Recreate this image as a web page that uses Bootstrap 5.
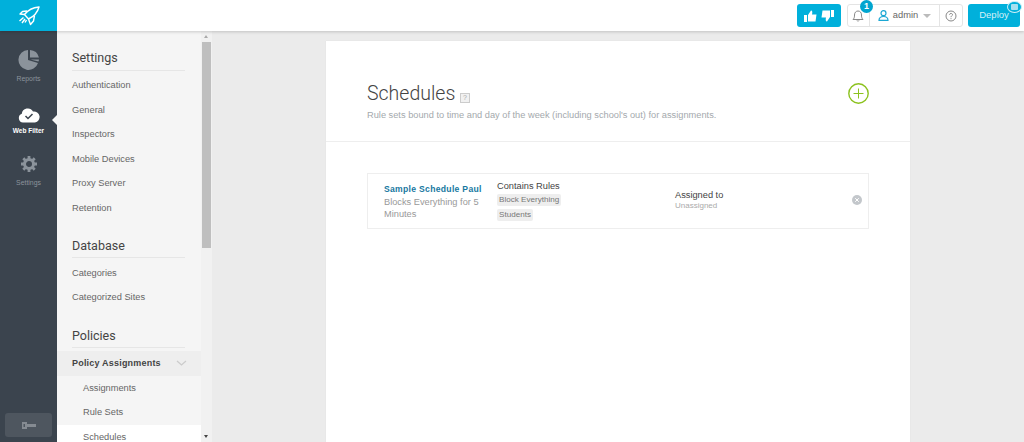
<!DOCTYPE html>
<html lang="en">
<head>
<meta charset="utf-8">
<title>Schedules</title>
<link href="https://cdn.jsdelivr.net/npm/bootstrap@5.3.0/dist/css/bootstrap.min.css" rel="stylesheet">
<style>
html,body{height:100%;overflow:hidden}
body{font-family:"Liberation Sans",Arial,sans-serif;background:#ebebeb;color:#333}
.shell{height:442px}
.topbar{height:31px;background:#fff;box-shadow:0 1px 3px rgba(0,0,0,.18);position:relative;z-index:3}
.logo-box{width:57px;height:31px;background:#00b0db}
.thumb-btn{width:44px;height:23px;background:#00b0db;border-radius:3px;margin-right:0}
.tool-group{height:23px;width:116px;border:1px solid #e4e4e4;border-radius:3px;margin-left:6px;margin-right:5px;font-size:9.3px;color:#666}
.tool-cell{height:100%;border-right:1px solid #e4e4e4}
.tool-cell:last-child{border-right:0}
.bell-cell{width:22px;position:relative}
.user-cell{width:71px;gap:4px}
.help-cell{width:22px}
.count-dot{position:absolute;top:-5px;left:12px;width:13px;height:13px;border-radius:50%;background:#00a5cf;color:#fff;font-size:9px;font-weight:700;line-height:13px;text-align:center}
.caret-down{width:0;height:0;border-left:4px solid transparent;border-right:4px solid transparent;border-top:4px solid #bbb;margin-left:1px}
.deploy-btn{width:52px;height:23px;background:#00b0db;border-radius:3px;color:#d5f1f8;font-size:9.500px;margin-right:4px;position:relative}
.deploy-flag{position:absolute;top:-3px;right:-2px;width:15px;height:12px;border-radius:50%;background:#00b0db;border:1px solid #cfeff7}
.deploy-flag::after{content:"";position:absolute;left:3px;top:2px;width:7px;height:6px;background:#a6e0f0;border-radius:1px}
.rail{width:57px;background:#3b444e;position:relative;padding-top:18px}
.rail-item{height:52px;font-size:6.9px;color:#8b939b}
.rail-item.is-on{color:#fff;font-weight:700;font-size:6.500px}
.icon-slot{height:22px;margin-bottom:3px}
.rail-pointer{position:absolute;right:0;top:84px;width:0;height:0;border-top:5px solid transparent;border-bottom:5px solid transparent;border-right:5px solid #f5f5f5}
.key-btn{position:absolute;left:5px;bottom:5px;width:47px;height:24px;background:#4e565f;border-radius:3px}
.subnav{width:144px;background:#f5f5f5;overflow:hidden;padding-top:18px;font-size:9.25px;color:#666}
.subnav-head{font-family:Roboto,"Liberation Sans",sans-serif;font-size:12.5px;color:#444;margin:0 16px 2.500px 15px;padding-bottom:3.500px;border-bottom:1px solid #e6e6e6;line-height:17px;font-weight:400}
.subnav-link{display:block;height:24.6px;line-height:24.6px;padding-left:15px;color:#666;text-decoration:none;white-space:nowrap}
.subnav-group{margin-bottom:16px}
.subnav-group+.subnav-group{margin-bottom:17px}
.subnav-open{background:#eeeeee;font-weight:700;color:#444;height:25px;line-height:24px;padding-right:14px;letter-spacing:.2px;font-size:9px}
.subnav-child{padding-left:26px}
.subnav-child.is-on{background:#fff;height:18px;line-height:24px}
.scroll-track{width:11px;background:#f1f1f1;position:relative}
.scroll-thumb{position:absolute;top:11px;left:1px;right:1px;height:206px;background:#bfbfbf}
.scroll-up,.scroll-down{position:absolute;left:3px;width:0;height:0;border-left:2.5px solid transparent;border-right:2.5px solid transparent}
.scroll-up{top:4px;border-bottom:3px solid #aaa}
.scroll-down{bottom:4px;border-top:3px solid #444}
.stage{min-width:0;padding:10px 0 0 114px;background:#ebebeb}
.sheet{width:584px;height:420px;background:#fff;box-shadow:0 0 1px rgba(0,0,0,.08)}
.sheet-head{height:101px;padding:41px 41px 0 41px;border-bottom:1px solid #eeeeee}
.sheet-title{font-family:Roboto,"Liberation Sans",sans-serif;font-size:19.5px;font-weight:300;color:#444;line-height:24px;margin:0}
.hint-box{display:inline-block;font-family:"Liberation Sans",sans-serif;width:10px;height:10px;border:1px solid #ccc;background:#f1f1f1;color:#aaa;font-size:7px;line-height:8px;text-align:center;vertical-align:0;margin-left:0;font-weight:400}
.sheet-sub{font-size:9.25px;color:#a4a9ad;margin:2px 0 0;line-height:14px}
.add-btn{margin-top:1px}
.sched-row{margin:31px 41px 0;height:56px;border:1px solid #eee;position:relative}
.sched-name{width:129px;padding:9px 14px 0 16px;line-height:12.5px;font-size:9.25px;color:#999}
.sched-name a{display:block;font-weight:700;color:#17789f;text-decoration:none;letter-spacing:.3px;white-space:nowrap;font-size:8.6px}
.sched-rules{width:178px;padding-top:6px;font-size:9.25px;color:#444;line-height:13px}
.rule-tag{display:table;background:#eee;border-radius:2px;font-size:8.1px;color:#777;padding:0 2px;line-height:12px;margin-top:1px;margin-bottom:3px}
.sched-assign{padding-top:16px;font-size:9.25px;color:#444;line-height:11px}
.sched-assign small{display:block;font-size:8px;color:#aaa;line-height:9px}
.remove-dot{position:absolute;right:6px;top:21px}
</style>
</head>
<body>
<div class="shell d-flex flex-column">
  <header class="topbar d-flex align-items-center flex-shrink-0">
    <div class="logo-box d-flex align-items-center justify-content-center">
      <svg width="22" height="20" viewBox="0 0 22 20" fill="none" stroke="#fff" stroke-width="1.4" stroke-linejoin="round"><path d="M21 1C15 1.500 10 4 6.500 8.500L10.500 13C16 10.500 19.500 6.500 21 1Z"/><path d="M6.500 8.500L2 8L4.500 5.500L9 5"/><path d="M10.500 13L12.500 18.500L15.500 15L16.500 9.500"/><path d="M5.500 11.500L1.500 15M7 13L4 17M8.500 14L7 16.500"/></svg>
    </div>
    <div class="flex-grow-1"></div>
    <div class="thumb-btn d-flex align-items-center justify-content-center gap-1">
      <svg width="13" height="12" viewBox="0 0 13 12" fill="#fff"><rect x="0" y="5" width="3" height="7"/><path d="M4 5L7 0.500C8.500 0.500 8.500 2.500 8 4.500H12.500L11.500 11.500H4Z"/></svg>
      <svg width="13" height="12" viewBox="0 0 13 12" fill="#fff"><rect x="10" y="0" width="3" height="7"/><path d="M9 7L6 11.500C4.500 11.500 4.500 9.500 5 7.500H0.500L1.500 0.500H9Z"/></svg>
    </div>
    <div class="tool-group d-flex align-items-center">
      <div class="tool-cell bell-cell d-flex align-items-center justify-content-center">
        <svg width="12" height="13" viewBox="0 0 12 13" fill="none" stroke="#888" stroke-width="1"><path d="M1 10.500H11C9.500 9 9.500 7.500 9.500 6C9.500 3.500 8 2 6 2C4 2 2.500 3.500 2.500 6C2.500 7.500 2.500 9 1 10.500Z"/><path d="M5 11.500C5.300 12.400 6.700 12.400 7 11.500"/></svg>
        <span class="count-dot">1</span>
      </div>
      <div class="tool-cell user-cell d-flex align-items-center justify-content-center">
        <svg width="11" height="11" viewBox="0 0 11 11" fill="none" stroke="#1ba7d3" stroke-width="1.200"><circle cx="5.500" cy="3.200" r="2.500"/><path d="M1 10.400C1 7.500 3 6.500 5.500 6.500C8 6.500 10 7.500 10 10.400Z"/></svg>
        <span>admin</span><span class="caret-down"></span>
      </div>
      <div class="tool-cell help-cell d-flex align-items-center justify-content-center">
        <svg width="12" height="12" viewBox="0 0 12 12" fill="none" stroke="#888"><circle cx="6" cy="6" r="5"/><path d="M4.500 4.800C4.500 3 7.500 3 7.500 4.700C7.500 5.800 6 5.800 6 7.200"/><path d="M6 8.200V9.200"/></svg>
      </div>
    </div>
    <div class="deploy-btn d-flex align-items-center justify-content-center">Deploy<span class="deploy-flag"></span></div>
  </header>
  <div class="d-flex flex-grow-1" style="min-height:0">
    <aside class="rail flex-shrink-0">
      <div class="rail-item d-flex flex-column align-items-center">
        <div class="icon-slot d-flex align-items-center">
          <svg width="22" height="22" viewBox="0 0 22 22"><path d="M10 1A10 10 0 1 0 20 14L10 11Z" fill="#8b939b"/><path d="M12 1A10 10 0 0 1 21 8.500L12 8.500Z" fill="#8b939b"/><path d="M12.500 10.500L21 10.500A10 10 0 0 1 20.500 12.500Z" fill="#8b939b"/></svg>
        </div>
        <span>Reports</span>
      </div>
      <div class="rail-item is-on d-flex flex-column align-items-center">
        <div class="icon-slot d-flex align-items-end">
          <svg width="22" height="16" viewBox="0 0 22 16"><path d="M5 15.500A4.500 4.500 0 0 1 3.800 6.800A6 6 0 0 1 15 4.500A5.500 5.500 0 0 1 17 15.500Z" fill="#fff"/><path d="M7.500 9L10 11.500L14.500 7" fill="none" stroke="#3b444e" stroke-width="1.500"/></svg>
        </div>
        <span>Web Filter</span>
      </div>
      <div class="rail-item d-flex flex-column align-items-center">
        <div class="icon-slot d-flex align-items-center">
          <svg width="16" height="16" viewBox="0 0 16 16"><circle cx="8" cy="8" r="4.500" fill="none" stroke="#8b939b" stroke-width="3"/><g stroke="#8b939b" stroke-width="2.800"><path d="M8 0V3M8 13V16M0 8H3M13 8H16M2.300 2.300L4.400 4.400M11.600 11.600L13.700 13.700M13.700 2.300L11.600 4.400M4.400 11.600L2.300 13.700"/></g></svg>
        </div>
        <span>Settings</span>
      </div>
      <span class="rail-pointer"></span>
      <div class="key-btn d-flex align-items-center justify-content-center">
        <svg width="14" height="7" viewBox="0 0 14 7" fill="#858b92"><path d="M0 0H5V2H14V5H5V7H0ZM1.500 2V5H3V2Z" fill-rule="evenodd"/></svg>
      </div>
    </aside>
    <nav class="subnav flex-shrink-0">
      <div class="subnav-group">
        <h6 class="subnav-head">Settings</h6>
        <a class="subnav-link" href="#">Authentication</a>
        <a class="subnav-link" href="#">General</a>
        <a class="subnav-link" href="#">Inspectors</a>
        <a class="subnav-link" href="#">Mobile Devices</a>
        <a class="subnav-link" href="#">Proxy Server</a>
        <a class="subnav-link" href="#">Retention</a>
      </div>
      <div class="subnav-group">
        <h6 class="subnav-head">Database</h6>
        <a class="subnav-link" href="#">Categories</a>
        <a class="subnav-link" href="#">Categorized Sites</a>
      </div>
      <div>
        <h6 class="subnav-head">Policies</h6>
        <a class="subnav-link subnav-open d-flex align-items-center justify-content-between" href="#">Policy Assignments
          <svg width="11" height="6" viewBox="0 0 11 6" fill="none" stroke="#ccc" stroke-width="1.300"><path d="M1 1L5.500 5L10 1"/></svg>
        </a>
        <a class="subnav-link subnav-child" href="#">Assignments</a>
        <a class="subnav-link subnav-child" href="#">Rule Sets</a>
        <a class="subnav-link subnav-child is-on" href="#">Schedules</a>
      </div>
    </nav>
    <div class="scroll-track flex-shrink-0">
      <span class="scroll-up"></span><span class="scroll-thumb"></span><span class="scroll-down"></span>
    </div>
    <main class="stage flex-grow-1">
      <section class="sheet">
        <div class="sheet-head d-flex justify-content-between align-items-start">
          <div>
            <h1 class="sheet-title">Schedules <span class="hint-box">?</span></h1>
            <p class="sheet-sub">Rule sets bound to time and day of the week (including school's out) for assignments.</p>
          </div>
          <svg class="add-btn" width="21" height="21" viewBox="0 0 21 21" fill="none" stroke="#8cc21f"><circle cx="10.500" cy="10.500" r="9.700" stroke-width="1.400"/><path d="M10.500 5.500V15.500M5.500 10.500H15.500" stroke-width="1"/></svg>
        </div>
        <div class="sched-row d-flex">
          <div class="sched-name flex-shrink-0"><a href="#">Sample Schedule Paul</a>Blocks Everything for 5 Minutes</div>
          <div class="sched-rules flex-shrink-0">Contains Rules
            <span class="rule-tag">Block Everything</span>
            <span class="rule-tag">Students</span>
          </div>
          <div class="sched-assign">Assigned to<small>Unassigned</small></div>
          <svg class="remove-dot" width="10" height="10" viewBox="0 0 10 10"><circle cx="5" cy="5" r="5" fill="#c3c7cb"/><path d="M3.200 3.200L6.800 6.800M6.800 3.200L3.200 6.800" stroke="#fff" stroke-width="1"/></svg>
        </div>
      </section>
    </main>
  </div>
</div>
<script src="https://cdn.jsdelivr.net/npm/bootstrap@5.3.0/dist/js/bootstrap.bundle.min.js"></script>
</body>
</html>
